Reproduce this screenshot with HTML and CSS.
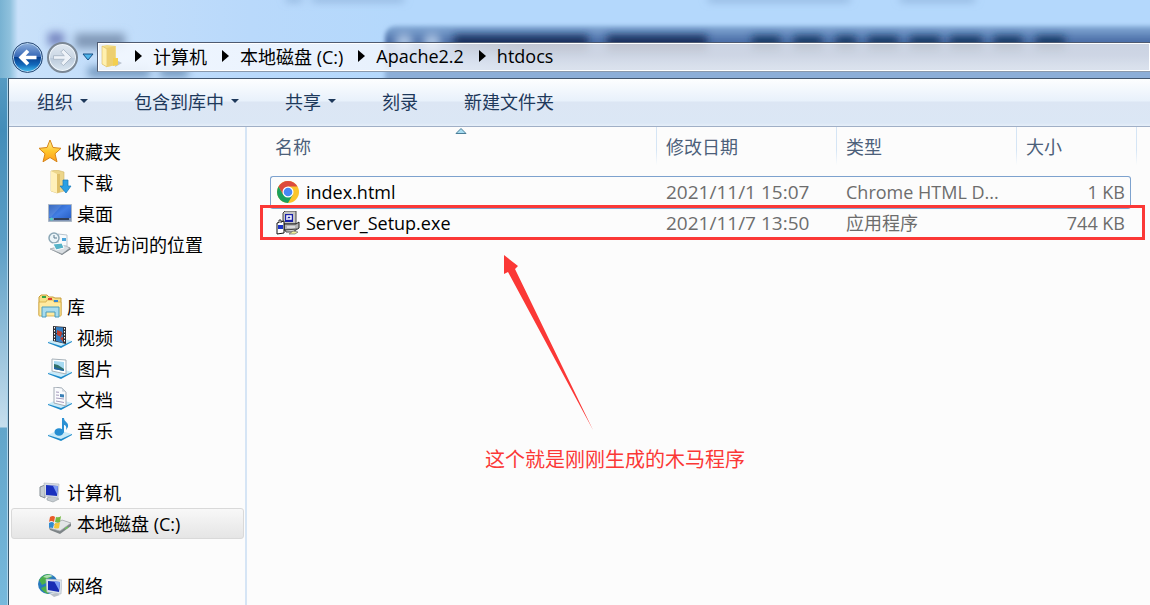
FILE: index.html
```html
<!DOCTYPE html>
<html lang="zh-CN">
<head>
    <meta charset="UTF-8">
    <meta name="viewport" content="width=device-width, initial-scale=1.0">
    <title>htdocs</title>
    <link rel="stylesheet" href="styles.css">
</head>
<body>
    <header class="glass">
        <!-- Windows behind the glass frame -->
        <svg class="behind" aria-hidden="true">
            <defs>
                <linearGradient id="bar" x1="0" y1="0" x2="0" y2="1">
                    <stop offset="0" stop-color="#86add8"/>
                    <stop offset=".22" stop-color="#4a6da6"/>
                    <stop offset=".42" stop-color="#5377b0"/>
                    <stop offset=".6" stop-color="#8caed8"/>
                </linearGradient>
                <filter id="soft" x="-5%" y="-40%" width="110%" height="180%"><feGaussianBlur stdDeviation="4"/></filter>
                <filter id="edge" x="-5%" y="-20%" width="110%" height="140%"><feGaussianBlur stdDeviation="2"/></filter>
            </defs>
            <rect x="385" y="26" width="3000" height="70" rx="10" fill="url(#bar)" filter="url(#edge)"/>
            <g filter="url(#soft)">
                <circle cx="404" cy="42" r="9" fill="#a7c1e2"/>
                <circle cx="432" cy="42" r="9" fill="#a7c1e2"/>
                <path d="M454 43H588M607 43H707" stroke="#132f5a" stroke-width="15"/>
                <path d="M752 43h28m14 0h28m14 0h20m12 0h30m12 0h30m10 0h32m12 0h28m14 0h29" stroke="#173762" stroke-width="13"/>
                <path d="M75 41h50" stroke="#8199b8" stroke-width="15"/>
                <path d="M48 39h16" stroke="#7585c0" stroke-width="13"/>
                <path d="M88 72h62M160 72h28" stroke="#7095bd" stroke-width="10"/>
                <path d="M286 -1h16M312 -1h92M708 -1h142M900 -1h75" stroke="#7fa2cc" stroke-width="4"/>
            </g>
        </svg>
        <div class="nav-buttons">
            <button class="round back" aria-label="后退">
                <svg viewBox="0 0 30 30" width="27" height="27">
                    <path d="M14 6 5 15l9 9 3-3-4-4h12v-4H13l4-4z" fill="#fff"/>
                </svg>
            </button>
            <button class="round forward" aria-label="前进">
                <svg viewBox="0 0 30 30" width="27" height="27">
                    <path d="m16 6 9 9-9 9-3-3 4-4H5v-4h12l-4-4z" fill="#edf2f8" stroke="#a9b7c6"/>
                </svg>
            </button>
            <button class="recent" aria-label="最近的页面">
                <svg viewBox="0 0 12 8" width="12" height="8">
                    <path d="M1 1h10L6 7z" fill="#4fb5ea" stroke="#174e85"/>
                </svg>
            </button>
        </div>
        <nav class="address" aria-label="地址">
            <svg class="folder" viewBox="0 0 22 24" width="22" height="24">
                <path d="m15 16 6 3-7 4z" fill="#8794a2" opacity=".5"/>
                <path d="M1 2 6 1l9 1v19l-9 2-5-3z" fill="#f1db85"/>
                <path d="m1 2 5 3v18l-5-3z" fill="#fff0ad" stroke="#d9bb61" stroke-width=".6"/>
                <path d="m6 4 8-2v19l-8 2z" fill="#edcf70"/>
                <path d="M12 14h5v7l-5 1z" fill="#f3cf50"/>
            </svg>
            <svg class="sep" viewBox="0 0 7 12"><path d="M0 0l7 6-7 6z"/></svg>
            <a href="#">计算机</a>
            <svg class="sep" viewBox="0 0 7 12"><path d="M0 0l7 6-7 6z"/></svg>
            <a href="#">本地磁盘 (C:)</a>
            <svg class="sep" viewBox="0 0 7 12"><path d="M0 0l7 6-7 6z"/></svg>
            <a href="#">Apache2.2</a>
            <svg class="sep" viewBox="0 0 7 12"><path d="M0 0l7 6-7 6z"/></svg>
            <a href="#">htdocs</a>
        </nav>
    </header>

    <div class="window">
        <div class="toolbar">
            <button class="drop">组织</button>
            <button class="drop">包含到库中</button>
            <button class="drop">共享</button>
            <button>刻录</button>
            <button>新建文件夹</button>
        </div>

        <div class="panes">
            <nav class="sidebar" aria-label="导航窗格">
                <ul>
                    <li><a href="#" class="group">
                        <svg viewBox="0 0 24 24">
                            <defs><linearGradient id="gold" x1="0" y1="0" x2="0" y2="1"><stop offset="0" stop-color="#fff3a0"/><stop offset=".5" stop-color="#ffc72e"/><stop offset="1" stop-color="#ff9d1c"/></linearGradient></defs>
                            <path d="m12 1 3 7.500 8 .8-6 5.500 2 8-7-4.300-7 4.300 2-8-6-5.500 8-.8z" fill="url(#gold)" stroke="#d78417"/>
                        </svg>收藏夹</a></li>
                    <li><a href="#">
                        <svg viewBox="0 0 24 24">
                            <path d="m3 1 6-1 7 2v19l-7 2-6-2z" fill="#ecd58a" stroke="#d2b566" stroke-width=".6"/>
                            <path d="m3 1 6 3v19l-6-2z" fill="#fff0b9"/>
                            <path d="M9 4h3v18l-3 1z" fill="#dfbf68"/>
                            <path d="M15 10h5v6h3l-5 7-6-7h3z" fill="#2ba0e4" stroke="#1675b6" stroke-width=".7"/>
                        </svg>下载</a></li>
                    <li><a href="#">
                        <svg viewBox="0 0 24 24">
                            <defs><linearGradient id="desk" x1="0" y1="0" x2="1" y2="1"><stop offset="0" stop-color="#1e55b4"/><stop offset=".5" stop-color="#437ee4"/><stop offset="1" stop-color="#2258be"/></linearGradient></defs>
                            <path d="M.5 3.500h23v17H.5z" fill="url(#desk)" stroke="#aab6c4"/>
                            <path d="M1 17h22v3H1z" fill="#8196b7"/>
                            <path d="M6 18h15" stroke="#17233d" stroke-width="1.500"/>
                            <circle cx="3.500" cy="18" r="1.500" fill="#4fd0c0"/>
                            <path d="M1 4h13L3 16H1z" fill="#fff" opacity=".12"/>
                        </svg>桌面</a></li>
                    <li><a href="#">
                        <svg viewBox="0 0 24 24">
                            <path d="m4 18 10 5 9-6-2-2z" fill="#747c83"/>
                            <path d="m2 17 12 5 8-6-6-3z" fill="#d8dde1" stroke="#969da3" stroke-width=".7"/>
                            <path d="m10 2 9 1v11l-9-1z" fill="#f7fafc" stroke="#b8c4ce"/>
                            <path d="M14 6h4v3h-4z" fill="#4aa4da"/>
                            <circle cx="6" cy="6" r="5" fill="#ebf4f8" stroke="#8ba7b6" stroke-width="1.500"/>
                            <path d="M6 3v3h3" fill="none" stroke="#58798e"/>
                            <path d="m5 12 9-1 2 5-8 2z" fill="#56b3c8" stroke="#fff"/>
                        </svg>最近访问的位置</a></li>
                </ul>

                <ul>
                    <li><a href="#" class="group">
                        <svg viewBox="0 0 24 24">
                            <path d="M1 3 3 1h6l2 2h4l2 1h6v17H1z" fill="#f5df88" stroke="#c99d38"/>
                            <path d="M1 8h7l1-2h6l1 2h7v14H1z" fill="#ffeaa0" stroke="#d3aa45" stroke-width=".8"/>
                            <path d="M4 2h4v2H4z" fill="#32a547"/><path d="M10 4h4v2h-4z" fill="#df392c"/><path d="M16 6h4v2h-4z" fill="#3687d1"/>
                            <path d="M4 13h17v10h-4v-5H8v5H4z" fill="#a9dced" stroke="#4b9cbd"/>
                        </svg>库</a></li>
                    <li><a href="#">
                        <svg viewBox="0 0 24 24">
                            <path d="m0 17 10-5 14 4-11 6z" fill="#c9eaf8"/><path d="m0 17 13 4 11-5v1l-11 6-13-5z" fill="#1c8aca"/>
                            <path d="m5 1 13 1v17L5 16z" fill="#302f35"/>
                            <path d="m8 2 7 .5v6L8 8zm0 7 7 .5V18l-7-2z" fill="#337fc5"/>
                            <path d="m9 5 5 2-1 5-4-2zm3 8 3-1v5z" fill="#be4130"/>
                            <path d="M6.500 2v14M16.500 3v15" stroke="#fff" stroke-dasharray="1.500 1.500"/>
                        </svg>视频</a></li>
                    <li><a href="#">
                        <svg viewBox="0 0 24 24">
                            <path d="m0 17 10-5 14 4-11 6z" fill="#c9eaf8"/><path d="m0 17 13 4 11-5v1l-11 6-13-5z" fill="#1c8aca"/>
                            <path d="m4 3 14 1v14L4 15z" fill="#fff" stroke="#a6b1b9"/>
                            <path d="m6 5 10 1v9L6 13z" fill="#a5d9f1"/>
                            <path d="m6 8 4 1 6 4v2L6 13z" fill="#31716a"/><path d="m6 11 10 3v1L6 13z" fill="#2366a8"/>
                        </svg>图片</a></li>
                    <li><a href="#">
                        <svg viewBox="0 0 24 24">
                            <path d="m0 17 10-5 14 4-11 6z" fill="#c9eaf8"/><path d="m0 17 13 4 11-5v1l-11 6-13-5z" fill="#1c8aca"/>
                            <path d="m6 0 8 1 4 4v14L6 16z" fill="#fafbfd" stroke="#a3acb5"/>
                            <path d="m14 1 4 4-4-.5z" fill="#cfd6dd"/>
                            <path d="m8 5 3 .3M8 8l3 .3M8 11l8 1M8 14l8 1.500" stroke="#a59abb"/>
                            <path d="m12 7 4 .5v3l-4-.5z" fill="#397fb5"/>
                        </svg>文档</a></li>
                    <li><a href="#">
                        <svg viewBox="0 0 24 24">
                            <path d="m0 17 10-5 14 4-11 6z" fill="#c9eaf8"/><path d="m0 17 13 4 11-5v1l-11 6-13-5z" fill="#1c8aca"/>
                            <ellipse cx="11" cy="14" rx="4.500" ry="3.800" fill="#258ed2"/>
                            <path d="M14 14V0h2c0 4 5 4 4 9l-2 3c1-4-1-5-2-5v8z" fill="#2b91d4"/>
                        </svg>音乐</a></li>
                </ul>

                <ul>
                    <li><a href="#" class="group">
                        <svg viewBox="0 0 24 24">
                            <path d="m2 7 5-2v13l-5-2z" fill="#c5cdd2" stroke="#858e95"/>
                            <path d="m9 18 6-2 6 3-6 3-6-2z" fill="#c4cbd0" stroke="#929aa0" stroke-width=".6"/>
                            <path d="m6 3 15 1-1 14-13-2z" fill="#d7dde3" stroke="#b4bcc4" stroke-width=".7"/>
                            <path d="m8 5 12 1-1 10-11-1z" fill="#1a31be"/><path d="m15 6 5 0-1 8z" fill="#7d9bf3"/>
                        </svg>计算机</a></li>
                    <li><a href="#" class="current" aria-current="page">
                        <svg viewBox="0 0 24 24">
                            <path d="m1 17 13-8 9 3v3l-11 8-10-4z" fill="#7d8487"/>
                            <path d="m1 17 13-8 9 3-11 8z" fill="#e2e5e6" stroke="#a3a8ab" stroke-width=".7"/>
                            <path d="M2 6q3-2 5 0l-1 5q-3-2-5 0z" fill="#e95b28"/><path d="M8 6q3 1 5-1l-1 6q-2 1-5 0z" fill="#74b941"/>
                            <path d="M1 12q3-2 5 0l-1 5q-3-1-4 0z" fill="#318bd0"/><path d="M7 12q3 1 5-1l-1 6q-2 1-5 0z" fill="#f5c638"/>
                            <path d="m17 18 3-2" stroke="#6cca58" stroke-width="1.500"/>
                        </svg>本地磁盘 (C:)</a></li>
                </ul>

                <ul>
                    <li><a href="#" class="group">
                        <svg viewBox="0 0 24 24">
                            <circle cx="10" cy="11" r="10" fill="#2879bd"/>
                            <path d="M1 7q4-6 10-6l3 3-5 2-1 4-4 2zm2 8 5-2 4 3-2 5q-5-2-7-6z" fill="#4baf4a"/>
                            <path d="M5 4q5-4 10-1L9 5z" fill="#d8f2e1" opacity=".7"/>
                            <path d="m12 21 7-1 3 2-6 2z" fill="#b9c0c8"/>
                            <path d="m8 6 16 1-1 14-14-2z" fill="#dbe3eb" stroke="#b4bcc4" stroke-width=".7"/>
                            <path d="m10 8 12 1-1 10-11-2z" fill="#182cb4"/><path d="m16 8 6 1-1 8z" fill="#7b9df4"/>
                        </svg>网络</a></li>
                </ul>
            </nav>

            <main class="files">
                <table>
                    <colgroup>
                        <col>
                        <col class="date-col">
                        <col class="type-col">
                        <col class="size-col">
                    </colgroup>
                    <thead>
                        <tr>
                            <th class="sorted">名称
                                <svg class="sort" viewBox="0 0 12 6" width="12" height="6"><path d="m1 5.500 5-5 5 5z" fill="#a8dcf0" stroke="#4a7e98"/></svg>
                            </th>
                            <th>修改日期</th>
                            <th>类型</th>
                            <th>大小</th>
                        </tr>
                    </thead>
                    <tbody>
                        <tr class="focused">
                            <td><a href="#">
                                <svg viewBox="0 0 24 24">
                                    <circle cx="12" cy="12" r="11" fill="#fbc52c"/>
                                    <path d="M2.500 6.500A11 11 0 0 1 21.500 6.500H12L7.200 14.800z" fill="#dc4b3e"/>
                                    <path d="M2.500 6.500A11 11 0 0 0 12 23l4.800-8.200H7.200z" fill="#19a05e"/>
                                    <circle cx="12" cy="12" r="5.500" fill="#fff"/>
                                    <circle cx="12" cy="12" r="4.300" fill="#4788f4"/>
                                </svg>index.html</a></td>
                            <td class="date">2021/11/1 15:07</td>
                            <td>Chrome HTML D...</td>
                            <td>1 KB</td>
                        </tr>
                        <tr>
                            <td><a href="#">
                                <svg viewBox="0 0 24 24">
                                    <path d="M7 2 9 0h11v13H7z" fill="#c5c5c5" stroke="#444"/>
                                    <path d="M9 3h8v8H9z" fill="#1820a8"/>
                                    <path d="M11 9V5h4v3h-3" fill="none" stroke="#fff" stroke-width="1.500"/>
                                    <path d="M8 13h12l3-2v6l-3 2H8z" fill="#b5b5b5" stroke="#222"/>
                                    <path d="M11 16h8" stroke="#fff"/>
                                    <path d="m9 19 12-1-4 3h-7z" fill="#d0d0d0" stroke="#444"/>
                                    <path d="m1 12 7-2v12l-7 1z" fill="#fff" stroke="#111"/>
                                    <path d="M2 14h5v4H2z" fill="#1c34c5"/>
                                    <path d="M3 12V9h2v3" fill="#fff" stroke="#333"/>
                                    <path d="m13 23 4-3 5 1-3 2z" fill="#eeee9b" stroke="#555" stroke-width=".6"/>
                                </svg>Server_Setup.exe</a></td>
                            <td class="date">2021/11/7 13:50</td>
                            <td>应用程序</td>
                            <td>744 KB</td>
                        </tr>
                    </tbody>
                </table>

                <!-- Red marks drawn over the list -->
                <div class="mark-box"></div>
                <svg class="mark-arrow" viewBox="0 0 90 176" width="90" height="176" aria-hidden="true">
                    <path d="M0 0 14 11 11 14 89 175 4 17 0 19z" fill="#fb3836"/>
                </svg>
                <p class="mark-text">这个就是刚刚生成的木马程序</p>
            </main>
        </div>
    </div>
</body>
</html>
```

FILE: styles.css
```css
* {
    box-sizing: border-box;
}

body {
    margin: 0;
    min-height: 100vh;
    display: flex;
    flex-direction: column;
    overflow: hidden;
    font-family: "Open Sans", "Noto Sans CJK SC", sans-serif;
    font-size: 18px;
    color: #000;
    background: linear-gradient(#72afd0, #438db9 130px, #5a9dc5 240px, #c6deed 427px, #62a5ca 428px, #77b9dc);
}

a {
    color: inherit;
    text-decoration: none;
}

button {
    padding: 0;
    border: 0;
    background: none;
    font: inherit;
    color: inherit;
}

ul {
    list-style: none;
    margin: 0;
    padding: 0;
}

svg {
    flex: none;
}

/* Title bar */
.glass {
    position: relative;
    display: flex;
    align-items: flex-start;
    height: 78px;
    padding: 42px 0 0 12px;
    background: linear-gradient(90deg, #78b2d2, #8fc1dd 10px, #c9e1fa 18px, #b9d9fb 250px, #b4d8fc 400px);
}

.behind {
    position: absolute;
    top: 0;
    left: 0;
    width: 100%;
    height: 100%;
}

.nav-buttons {
    position: relative;
    display: flex;
    align-items: center;
    height: 30px;
    width: 85px;
    gap: 4px;
}

.round {
    width: 31px;
    height: 31px;
    flex: none;
    border-radius: 50%;
    display: flex;
    align-items: center;
    justify-content: center;
}

.back {
    border: 1px solid #2e4e79;
    background: linear-gradient(#8fb0dd, #3265b5 48%, #08408f 50%, #1269bb 75%, #45c5f3);
    box-shadow: inset 0 0 0 1px #b4d2ed;
}

.forward {
    border: 2px solid #7b8794;
    background: linear-gradient(#dfe8f1, #cbd7e4 50%, #bac9da 51%, #dbe7f1);
    box-shadow: inset 0 0 0 1px #f0f6fb;
}

.recent {
    display: flex;
    flex: none;
}

.address {
    position: relative;
    flex: 1;
    display: flex;
    align-items: center;
    height: 30px;
    padding: 0 0 2px 3px;
    border: 1px solid #4e5a70;
    border-right: 0;
    border-bottom-color: #8b99ac;
    box-shadow: inset 0 0 0 1px #fff;
    background: linear-gradient(90deg, rgba(245, 249, 255, .9), rgba(240, 245, 253, .85) 300px, rgba(240, 240, 243, .78) 430px);
    white-space: nowrap;
}

.folder {
    margin-right: 12px;
}

.sep {
    width: 7px;
    height: 12px;
    margin: 0 11px 0 15px;
}

.folder + .sep {
    margin-left: 0;
}

/* Window body */
.window {
    flex: 1;
    display: flex;
    flex-direction: column;
    margin-left: 8px;
    border-left: 1px solid #38586f;
    border-top: 1px solid #42566f;
    background: #fcfcfc;
    box-shadow: -1px 0 0 #a9d3eb;
}

.toolbar {
    display: flex;
    align-items: center;
    gap: 46px;
    height: 48px;
    padding: 0 0 3px 28px;
    color: #1e395b;
    border-bottom: 1px solid #a0afc6;
    background: linear-gradient(#fdfeff, #e8f1fb 22px, #dce6f4 23px, #dbe7f5 44px, #e6eff9);
}

.drop {
    display: flex;
    align-items: center;
    gap: 7px;
}

.drop::after {
    content: "";
    border: 4px solid transparent;
    border-top-color: #1e395b;
    border-bottom: 0;
}

.panes {
    flex: 1;
    display: flex;
}

.sidebar {
    width: 238px;
    flex: none;
    padding: 9px 1px 4px 2px;
    border-right: 2px solid #d6e5f5;
}

.sidebar ul + ul {
    margin-top: 31px;
}

.sidebar a {
    display: flex;
    align-items: center;
    gap: 5px;
    height: 31px;
    padding: 0 0 2px 36px;
    border: 1px solid transparent;
    white-space: nowrap;
}

.sidebar .group {
    padding-left: 26px;
}

.sidebar svg,
.files td svg {
    width: 24px;
    height: 24px;
}

.sidebar .current {
    border-color: #d9d9d9;
    border-radius: 3px;
    background: linear-gradient(#f8f8f8, #e5e5e5);
}

/* File list */
.files {
    position: relative;
    flex: 1;
    padding: 0 19px 0 23px;
}

table {
    width: 100%;
    table-layout: fixed;
    border-collapse: separate;
    border-spacing: 0;
}

.date-col,
.type-col {
    width: 180px;
}

.size-col {
    width: 115px;
}

th {
    position: relative;
    height: 49px;
    padding: 0 10px;
    font-weight: normal;
    line-height: 41px;
    text-align: left;
    vertical-align: top;
    color: #4c607a;
}

th:first-child {
    padding-left: 5px;
}

th + th::before,
th:last-child::after {
    content: "";
    position: absolute;
    top: 0;
    left: 0;
    width: 1px;
    height: 38px;
    background: linear-gradient(#d5e5f5 60%, #fcfcfc);
}

th:last-child::after {
    left: auto;
    right: -6px;
}

.sort {
    position: absolute;
    top: 1px;
    left: calc(50% - 8px);
}

td {
    height: 30px;
    padding: 0 0 2px 10px;
    line-height: 28px;
    color: #6d6d6d;
    white-space: nowrap;
}

td.date {
    font-size: 19px;
}

td:first-child {
    padding-left: 6px;
    color: #000;
}

td:last-child {
    padding-right: 6px;
    text-align: right;
}

td a {
    display: flex;
    align-items: center;
    gap: 6px;
}

.focused td {
    height: 33px;
    border: 1px solid #7da2ce;
    border-width: 1px 0;
}

.focused td:first-child {
    padding-left: 5px;
    border-left-width: 1px;
    border-radius: 3px 0 0 3px;
}

.focused td:last-child {
    padding-right: 5px;
    border-right-width: 1px;
    border-radius: 0 3px 3px 0;
}

.mark-box {
    position: absolute;
    top: 78px;
    left: 13px;
    right: 5px;
    height: 35px;
    border: 3px solid #fb3836;
}

.mark-arrow {
    position: absolute;
    top: 128px;
    left: 257px;
}

.mark-text {
    position: absolute;
    top: 319px;
    left: 238px;
    margin: 0;
    font-size: 20px;
    line-height: 28px;
    color: #fb3836;
}
```
